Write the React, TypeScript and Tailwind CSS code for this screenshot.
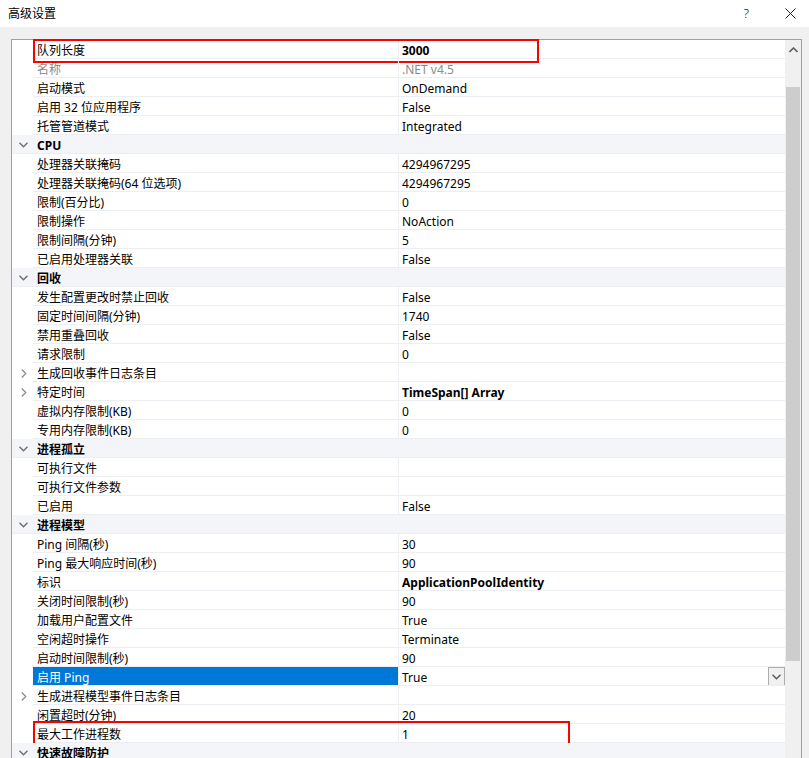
import React from "react";

type Row = {
  name: string;
  value?: string;
  cat?: boolean;
  bold?: boolean;
  expand?: boolean;
  gray?: boolean;
  selected?: boolean;
};

const rows: Row[] = [
  { name: "队列长度", value: "3000", bold: true },
  { name: "名称", value: ".NET v4.5", gray: true },
  { name: "启动模式", value: "OnDemand" },
  { name: "启用 32 位应用程序", value: "False" },
  { name: "托管管道模式", value: "Integrated" },
  { name: "CPU", cat: true },
  { name: "处理器关联掩码", value: "4294967295" },
  { name: "处理器关联掩码(64 位选项)", value: "4294967295" },
  { name: "限制(百分比)", value: "0" },
  { name: "限制操作", value: "NoAction" },
  { name: "限制间隔(分钟)", value: "5" },
  { name: "已启用处理器关联", value: "False" },
  { name: "回收", cat: true },
  { name: "发生配置更改时禁止回收", value: "False" },
  { name: "固定时间间隔(分钟)", value: "1740" },
  { name: "禁用重叠回收", value: "False" },
  { name: "请求限制", value: "0" },
  { name: "生成回收事件日志条目", value: "", expand: true },
  { name: "特定时间", value: "TimeSpan[] Array", expand: true, bold: true },
  { name: "虚拟内存限制(KB)", value: "0" },
  { name: "专用内存限制(KB)", value: "0" },
  { name: "进程孤立", cat: true },
  { name: "可执行文件", value: "" },
  { name: "可执行文件参数", value: "" },
  { name: "已启用", value: "False" },
  { name: "进程模型", cat: true },
  { name: "Ping 间隔(秒)", value: "30" },
  { name: "Ping 最大响应时间(秒)", value: "90" },
  { name: "标识", value: "ApplicationPoolIdentity", bold: true },
  { name: "关闭时间限制(秒)", value: "90" },
  { name: "加载用户配置文件", value: "True" },
  { name: "空闲超时操作", value: "Terminate" },
  { name: "启动时间限制(秒)", value: "90" },
  { name: "启用 Ping", value: "True", selected: true },
  { name: "生成进程模型事件日志条目", value: "", expand: true },
  { name: "闲置超时(分钟)", value: "20" },
  { name: "最大工作进程数", value: "1" },
  { name: "快速故障防护", cat: true },
];

const ChevronDown = ({ color = "#6b6b6b" }: { color?: string }) => (
  <svg width="9" height="6" viewBox="0 0 9 6">
    <path d="M0.5 0.8 L4.5 4.8 L8.5 0.8" fill="none" stroke={color} strokeWidth="1.3" />
  </svg>
);

const ChevronRight = () => (
  <svg width="6" height="9" viewBox="0 0 6 9">
    <path d="M0.8 0.5 L4.8 4.5 L0.8 8.5" fill="none" stroke="#8a8a8a" strokeWidth="1.2" />
  </svg>
);

function GridRow({ r, i }: { r: Row; i: number }) {
  if (r.cat) {
    return (
      <div className="relative flex h-[19px] items-start bg-[#f3f5f9] border-b border-[#eceef3]">
        <div className="flex h-[18px] w-[21px] shrink-0 items-center justify-center pl-[1px] pt-[1px]">
          <ChevronDown />
        </div>
        <div className="pl-[4px] pt-[3px] text-[12px] font-bold leading-[16px] text-black">{r.name}</div>
      </div>
    );
  }
  return (
    <div className="relative flex h-[19px]">
      <div className="flex w-[21px] shrink-0 items-center justify-center pl-[2px] pt-[1px]">
        {r.expand ? <ChevronRight /> : null}
      </div>
      <div
        className={
          "flex w-[366px] shrink-0 items-start overflow-hidden border-b border-r border-[#eceef3] pl-[4px] pt-[3px] text-[12px] leading-[16px] " +
          (r.selected ? "bg-[#0078d7] text-white" : r.gray ? "text-[#8a8a8a]" : "text-black")
        }
      >
        {r.name}
      </div>
      <div
        className={
          "relative flex flex-1 items-start overflow-hidden border-b border-[#eceef3] pl-[3px] pt-[3px] text-[12px] leading-[16px] " +
          (r.gray ? "text-[#8a8a8a]" : "text-black") +
          (r.bold ? " font-bold" : "")
        }
      >
        <span>{r.value}</span>
        {r.selected ? (
          <div className="absolute right-0 top-0 flex h-[19px] w-[17px] items-center justify-center border border-[#adadad] bg-[#f0f0f0]">
            <ChevronDown color="#555" />
          </div>
        ) : null}
      </div>
      {i === 0 ? (
        <div className="pointer-events-none absolute left-[21px] top-[-1px] h-[24px] w-[506px] border-2 border-[#ff0000]" />
      ) : null}
      {i === 36 ? (
        <div className="pointer-events-none absolute left-[21px] top-[-3px] h-[24px] w-[537px] border-2 border-[#ff0000]" />
      ) : null}
    </div>
  );
}

export default function App() {
  return (
    <div
      className="flex h-[758px] w-[809px] flex-col overflow-hidden bg-[#f0f0f0]"
      style={{ fontFamily: '"Noto Sans", "Noto Sans CJK SC", sans-serif' }}
    >
      <div className="flex h-[27px] shrink-0 items-center justify-between bg-white pl-[8px] pr-[13px]">
        <span className="text-[12px] text-black">高级设置</span>
        <div className="flex items-center gap-[36px]">
          <span className="text-[13px] font-light text-black">?</span>
          <svg width="11" height="11" viewBox="0 0 11 11">
            <path d="M0.5 0.5 L10.5 10.5 M10.5 0.5 L0.5 10.5" stroke="#222" strokeWidth="1" />
          </svg>
        </div>
      </div>
      <div className="ml-[11px] mr-[7px] mt-[12px] flex flex-1 border border-[#a0a0a0] border-b-0 bg-white">
        <div className="flex flex-1 flex-col">
          {rows.map((r, i) => (
            <GridRow key={i} r={r} i={i} />
          ))}
        </div>
        <div className="flex w-[16px] shrink-0 flex-col bg-[#f0f0f0]">
          <div className="flex h-[20px] items-center justify-center">
            <svg width="9" height="6" viewBox="0 0 9 6">
              <path d="M0.5 5 L4.5 1 L8.5 5" fill="none" stroke="#606060" strokeWidth="1.6" />
            </svg>
          </div>
          <div className="ml-[1px] mr-[1px] mt-[27px] h-[574px] bg-[#cdcdcd]" />
        </div>
      </div>
    </div>
  );
}
